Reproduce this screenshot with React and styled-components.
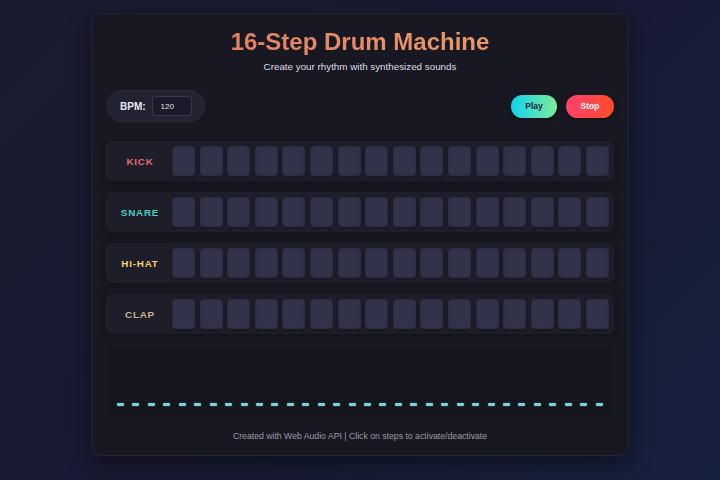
import React from 'react';
import styled, { createGlobalStyle } from 'styled-components';

const GlobalStyle = createGlobalStyle`
  html, body {
    margin: 0;
    padding: 0;
    height: 100%;
  }
  body {
    font-family: "Liberation Sans", Arial, sans-serif;
    background: linear-gradient(135deg, #1b1b30 0%, #191a33 50%, #16213e 100%);
    min-height: 480px;
  }
`;

const Page = styled.div`
  width: 720px;
  height: 480px;
  display: flex;
  justify-content: center;
  padding-top: 13px;
  box-sizing: border-box;
`;

const Machine = styled.div`
  width: 538px;
  height: 443px;
  box-sizing: border-box;
  background: #181822;
  border: 1px solid #262636;
  border-radius: 10px;
  box-shadow: 0 8px 24px rgba(0, 0, 0, 0.45);
  padding: 14px 14px 0 14px;
  display: flex;
  flex-direction: column;
`;

const Title = styled.h1`
  margin: 0;
  text-align: center;
  font-size: 24px;
  line-height: 28px;
  font-weight: bold;
  background: linear-gradient(90deg, #e0755f, #eba46f);
  -webkit-background-clip: text;
  background-clip: text;
  color: transparent;
`;

const Subtitle = styled.p`
  margin: 5px 0 0 0;
  text-align: center;
  font-size: 9.8px;
  line-height: 12px;
  color: #dcdce6;
`;

const Controls = styled.div`
  display: flex;
  align-items: center;
  justify-content: space-between;
  margin-top: 17px;
`;

const BpmPill = styled.div`
  display: flex;
  align-items: center;
  gap: 6px;
  height: 32px;
  box-sizing: border-box;
  padding: 0 12px 0 13px;
  background: #222233;
  border: 1px solid #2a2a3c;
  border-radius: 16px;
`;

const BpmLabel = styled.span`
  color: #e8e8f0;
  font-size: 10px;
  font-weight: bold;
`;

const BpmInput = styled.input`
  width: 40px;
  height: 20px;
  box-sizing: border-box;
  background: #1a1a28;
  border: 1px solid #363650;
  border-radius: 3px;
  color: #e0e0e8;
  font-family: "Liberation Sans", Arial, sans-serif;
  font-size: 8px;
  padding: 0 8px;
  outline: none;
`;

const Buttons = styled.div`
  display: flex;
  gap: 9px;
`;

const Button = styled.button`
  height: 23px;
  width: ${p => p.$w}px;
  border: none;
  border-radius: 12px;
  font-family: "Liberation Sans", Arial, sans-serif;
  font-size: 8.5px;
  font-weight: bold;
  cursor: pointer;
  background: ${p => p.$bg};
  color: ${p => p.$fg};
  box-shadow: 0 2px 6px rgba(0, 0, 0, 0.3);
`;

const Tracks = styled.div`
  display: flex;
  flex-direction: column;
  gap: 11px;
  margin-top: 19px;
`;

const Track = styled.div`
  display: flex;
  align-items: center;
  height: 40px;
  background: #1e1e2b;
  border-radius: 6px;
  padding: 0 5px 0 0;
  box-shadow: 0 2px 6px rgba(0, 0, 0, 0.25);
`;

const TrackName = styled.div`
  width: 68px;
  flex-shrink: 0;
  text-align: center;
  font-size: 9.8px;
  font-weight: bold;
  letter-spacing: 0.8px;
  color: ${p => p.$color};
`;

const Steps = styled.div`
  display: grid;
  grid-template-columns: repeat(16, 23px);
  column-gap: 4.6px;
  flex: 1;
  margin-left: -2px;
`;

const Step = styled.div`
  height: 30px;
  background: #32324a;
  border-radius: 4px;
  box-shadow: inset 0 0 3px rgba(0, 0, 0, 0.25), 0 1px 3px rgba(0, 0, 0, 0.3);
  cursor: pointer;
`;

const Visualizer = styled.div`
  margin-top: 15px;
  height: 67px;
  background: #15151e;
  border-radius: 6px;
  display: flex;
  align-items: flex-end;
  justify-content: space-between;
  padding: 0 11px 10px 11px;
  box-sizing: border-box;
`;

const Bar = styled.div`
  width: 7px;
  height: 3px;
  background: #7fd3d8;
  border-radius: 1px;
  box-shadow: 0 0 2px rgba(78, 205, 196, 0.5);
`;

const Footer = styled.p`
  margin: 15px 0 0 0;
  text-align: center;
  font-size: 8.7px;
  color: #9a9aa8;
`;

const tracks = [
  { name: 'KICK', color: '#e46a78' },
  { name: 'SNARE', color: '#4ecdc4' },
  { name: 'HI-HAT', color: '#f4d06f' },
  { name: 'CLAP', color: '#c8b48e' },
];

export default function App() {
  return (
    <>
      <GlobalStyle />
      <Page>
        <Machine>
          <Title>16-Step Drum Machine</Title>
          <Subtitle>Create your rhythm with synthesized sounds</Subtitle>
          <Controls>
            <BpmPill>
              <BpmLabel>BPM:</BpmLabel>
              <BpmInput type="text" defaultValue="120" />
            </BpmPill>
            <Buttons>
              <Button $w={46} $bg="linear-gradient(90deg, #12d3f0, #7deb98)" $fg="#16213e">Play</Button>
              <Button $w={48} $bg="linear-gradient(90deg, #ff416c, #ff4b2b)" $fg="#ffffff">Stop</Button>
            </Buttons>
          </Controls>
          <Tracks>
            {tracks.map(t => (
              <Track key={t.name}>
                <TrackName $color={t.color}>{t.name}</TrackName>
                <Steps>
                  {Array.from({ length: 16 }, (_, i) => <Step key={i} />)}
                </Steps>
              </Track>
            ))}
          </Tracks>
          <Visualizer>
            {Array.from({ length: 32 }, (_, i) => <Bar key={i} />)}
          </Visualizer>
          <Footer>Created with Web Audio API | Click on steps to activate/deactivate</Footer>
        </Machine>
      </Page>
    </>
  );
}
